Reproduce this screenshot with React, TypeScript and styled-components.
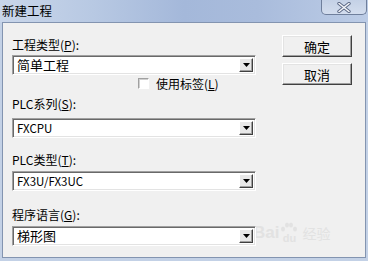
import styled, { createGlobalStyle } from "styled-components";

const GlobalStyle = createGlobalStyle`
  html, body {
    margin: 0;
    padding: 0;
    background: #c3d1e6;
  }
  * {
    box-sizing: border-box;
  }
`;

const Window = styled.div`
  width: 368px;
  height: 261px;
  overflow: hidden;
  position: relative;
  background: #c3d1e6;
  font-family: "Noto Sans CJK SC", "DejaVu Sans", sans-serif;
  font-size: 12px;
  color: #000;
  display: flex;
  flex-direction: column;
`;

const TitleBar = styled.div`
  height: 22px;
  display: flex;
  align-items: flex-start;
  justify-content: space-between;
  background: linear-gradient(
    to right,
    #c9d6ea 0%,
    #b8c9e3 25%,
    #a4b8da 50%,
    #a9bcdc 70%,
    #bccce6 100%
  );
`;

const Title = styled.div`
  padding: 3px 0 0 2px;
  font-size: 12.5px;
  line-height: 15px;
`;

const CloseButton = styled.div`
  width: 46px;
  height: 15px;
  margin-right: 1px;
  border: 1px solid #6f7f9c;
  border-top: none;
  border-radius: 0 0 5px 5px;
  background: linear-gradient(to bottom, #c4d1e6, #d3ddee);
  display: flex;
  align-items: center;
  justify-content: center;
`;

const Body = styled.div`
  flex: 1;
  margin: 0 2px 3px 2px;
  border: 1px solid #8394b0;
  background: #f0f0f0;
  display: flex;
  padding: 12px 0 0 9px;
  position: relative;
`;

const Form = styled.div`
  width: 244px;
  display: flex;
  flex-direction: column;
  position: relative;
  z-index: 1;
`;

const Label = styled.div<{ $top: number }>`
  margin-top: ${(p) => p.$top}px;
  height: 16px;
  line-height: 16px;
  white-space: nowrap;
`;

const Combo = styled.div<{ $top: number }>`
  margin-top: ${(p) => p.$top}px;
  height: 20px;
  background: #fff;
  border-top: 1px solid #a0a0a0;
  border-left: 1px solid #a0a0a0;
  border-right: 1px solid #fff;
  border-bottom: 1px solid #fff;
  box-shadow: inset 1px 1px 0 #696969, inset -1px -1px 0 #e3e3e3;
  display: flex;
  align-items: center;
  justify-content: space-between;
  padding: 0 2px 0 4px;
`;

const ComboText = styled.span<{ $latin?: boolean }>`
  font-size: ${(p) => (p.$latin ? "11.5px" : "13px")};
  line-height: 16px;
`;

const DropButton = styled.div`
  width: 14px;
  height: 14px;
  background: #e8e8e8;
  border-top: 1px solid #fff;
  border-left: 1px solid #fff;
  border-right: 1px solid #404040;
  border-bottom: 1px solid #404040;
  box-shadow: inset -1px -1px 0 #a0a0a0;
  display: flex;
  align-items: center;
  justify-content: center;
`;

const CheckRow = styled.label`
  margin-top: 2px;
  height: 12px;
  display: flex;
  align-items: center;
  gap: 7px;
  padding-left: 126px;
`;

const CheckBox = styled.span`
  width: 11px;
  height: 11px;
  background: #fff;
  border-top: 1px solid #a0a0a0;
  border-left: 1px solid #a0a0a0;
  border-right: 1px solid #fff;
  border-bottom: 1px solid #fff;
  box-shadow: inset 1px 1px 0 #d0d0d0;
`;

const Buttons = styled.div`
  margin-left: 26px;
  display: flex;
  flex-direction: column;
  gap: 6px;
`;

const Button = styled.div`
  width: 70px;
  height: 22px;
  background: #f0f0f0;
  border-top: 1px solid #fff;
  border-left: 1px solid #fff;
  border-right: 1px solid #404040;
  border-bottom: 1px solid #404040;
  box-shadow: inset -1px -1px 0 #a0a0a0, inset 1px 1px 0 #e3e3e3;
  display: flex;
  align-items: center;
  justify-content: center;
  font-size: 13px;
`;

/* faint site watermark lying over the lower right corner */
const Watermark = styled.div`
  position: absolute;
  left: 250px;
  bottom: 14px;
  display: flex;
  align-items: center;
  gap: 1px;
  color: #e2e2e2;
  font-family: "Liberation Sans", sans-serif;
  font-size: 17px;
  font-weight: bold;
`;

const PawBox = styled.span`
  display: flex;
  flex-direction: column;
  align-items: center;
  font-size: 11px;
  line-height: 9px;
`;

const WaterCn = styled.span`
  font-family: "Noto Sans CJK SC", sans-serif;
  font-size: 14px;
  font-weight: normal;
  margin-left: 3px;
`;

const Arrow = () => (
  <svg width="7" height="4" viewBox="0 0 7 4">
    <path d="M0 0 H7 L3.5 4 Z" fill="#000" />
  </svg>
);

const CloseX = () => (
  <svg width="14" height="11" viewBox="0 0 14 11">
    <path d="M2 1.5 L12 9.5 M12 1.5 L2 9.5" stroke="#5a6784" strokeWidth="3.4" strokeLinecap="round" />
    <path d="M2 1.5 L12 9.5 M12 1.5 L2 9.5" stroke="#f4f6fa" strokeWidth="1.6" strokeLinecap="round" />
  </svg>
);

const Paw = () => (
  <svg width="18" height="12" viewBox="0 0 18 12">
    <g fill="#e2e2e2">
      <ellipse cx="3" cy="7" rx="2" ry="2.6" />
      <ellipse cx="7" cy="3" rx="2" ry="2.6" />
      <ellipse cx="11" cy="3" rx="2" ry="2.6" />
      <ellipse cx="15" cy="7" rx="2" ry="2.6" />
    </g>
  </svg>
);

function Combobox({ top, text, latin }: { top: number; text: string; latin?: boolean }) {
  return (
    <Combo $top={top}>
      <ComboText $latin={latin}>{text}</ComboText>
      <DropButton>
        <Arrow />
      </DropButton>
    </Combo>
  );
}

export default function App() {
  return (
    <>
      <GlobalStyle />
      <Window>
        <TitleBar>
          <Title>新建工程</Title>
          <CloseButton>
            <CloseX />
          </CloseButton>
        </TitleBar>
        <Body>
          <Form>
            <Label $top={2}>
              工程类型(<u>P</u>):
            </Label>
            <Combobox top={2} text="简单工程" />
            <CheckRow>
              <CheckBox />
              <span>
                使用标签(<u>L</u>)
              </span>
            </CheckRow>
            <Label $top={7}>
              PLC系列(<u>S</u>):
            </Label>
            <Combobox top={6} text="FXCPU" latin />
            <Label $top={14}>
              PLC类型(<u>T</u>):
            </Label>
            <Combobox top={3} text="FX3U/FX3UC" latin />
            <Label $top={16}>
              程序语言(<u>G</u>):
            </Label>
            <Combobox top={3} text="梯形图" />
          </Form>
          <Buttons>
            <Button>确定</Button>
            <Button>取消</Button>
          </Buttons>
          <Watermark>
            Bai
            <PawBox>
              <Paw />
              du
            </PawBox>
            <WaterCn>经验</WaterCn>
          </Watermark>
        </Body>
      </Window>
    </>
  );
}
